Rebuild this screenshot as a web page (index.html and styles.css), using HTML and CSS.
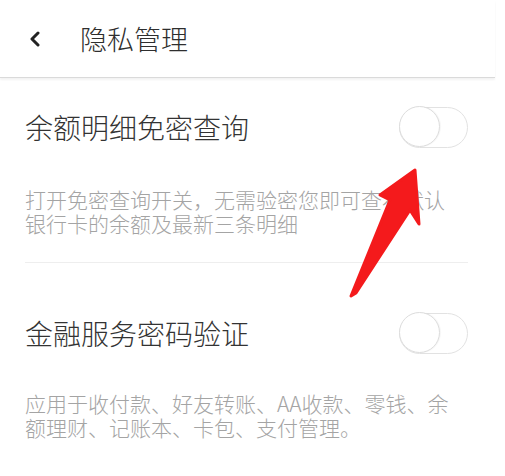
FILE: index.html
```html
<!DOCTYPE html>
<html lang="zh-CN">
<head>
<meta charset="utf-8">
<title>隐私管理</title>
<link rel="stylesheet" href="styles.css">
</head>
<body>
<div class="page">
  <header class="topbar">
    <svg class="back" width="14" height="16" viewBox="0 0 14 16" aria-hidden="true">
      <polyline points="10,2 4,8 10,14" fill="none" stroke="#222" stroke-width="3" stroke-linecap="round" stroke-linejoin="round"/>
    </svg>
    <h1 class="title">隐私管理</h1>
  </header>

  <section class="list">
    <div class="item">
      <div class="item-head">
        <span class="item-title">余额明细免密查询</span>
        <span class="switch"><span class="knob"></span></span>
      </div>
      <p class="item-desc">打开免密查询开关，无需验密您即可查看默认银行卡的余额及最新三条明细</p>
    </div>
    <div class="item">
      <div class="item-head">
        <span class="item-title">金融服务密码验证</span>
        <span class="switch"><span class="knob"></span></span>
      </div>
      <p class="item-desc">应用于收付款、好友转账、AA收款、零钱、余额理财、记账本、卡包、支付管理。</p>
    </div>
  </section>

  <svg class="arrow" width="505" height="476" viewBox="0 0 505 476" aria-hidden="true">
    <polygon points="351,296 390,200 380,195 415,170 419,224 410,210 356,293" fill="#f41a1c" stroke="#f41a1c" stroke-width="3" stroke-linejoin="round"/>
  </svg>
</div>
</body>
</html>
```

FILE: styles.css
```css
html, body {
  margin: 0;
  padding: 0;
  background: #ffffff;
}

body {
  font-family: "Noto Sans CJK SC", "Noto Sans", sans-serif;
  font-weight: 300;
  color: #333333;
}

.page {
  position: relative;
  width: 505px;
  height: 476px;
  overflow: hidden;
}

.topbar {
  display: flex;
  align-items: center;
  height: 77px;
  margin-right: 10px;
  padding-left: 28px;
  border-bottom: 1px solid #dadada;
  box-shadow: 0 2px 2px rgba(0, 0, 0, 0.05);
}

.back {
  display: block;
  flex: none;
}

.title {
  margin: 0 0 0 38px;
  font-size: 27px;
  font-weight: 300;
  line-height: 32px;
  color: #2e2e2e;
}

.list {
  padding: 0 37px 0 25px;
}

.item {
  padding-top: 17px;
  padding-bottom: 27px;
}

.item + .item {
  padding-top: 38px;
}

.item:first-child {
  border-bottom: 1px solid #eeeeee;
}

.item-head {
  display: flex;
  align-items: center;
  justify-content: space-between;
  height: 64px;
}

.item-title {
  font-size: 28px;
  line-height: 34px;
  color: #333333;
}

.switch {
  position: relative;
  display: block;
  flex: none;
  width: 67px;
  height: 39px;
  border: 1.5px solid #e2e2e2;
  border-radius: 21px;
  background: #ffffff;
}

.knob {
  position: absolute;
  left: -1.5px;
  top: -1.5px;
  width: 39px;
  height: 39px;
  border: 1.5px solid #dddddd;
  border-radius: 50%;
  background: #ffffff;
  box-shadow: 1px 0 1px rgba(0, 0, 0, 0.04);
}

.item-desc {
  margin: 28px 0 0;
  max-width: 435px;
  font-size: 21px;
  line-height: 24px;
  color: #a4a4a4;
}

.item + .item .item-desc {
  margin-top: 26px;
}

.arrow {
  position: absolute;
  left: 0;
  top: 0;
  pointer-events: none;
}
```
